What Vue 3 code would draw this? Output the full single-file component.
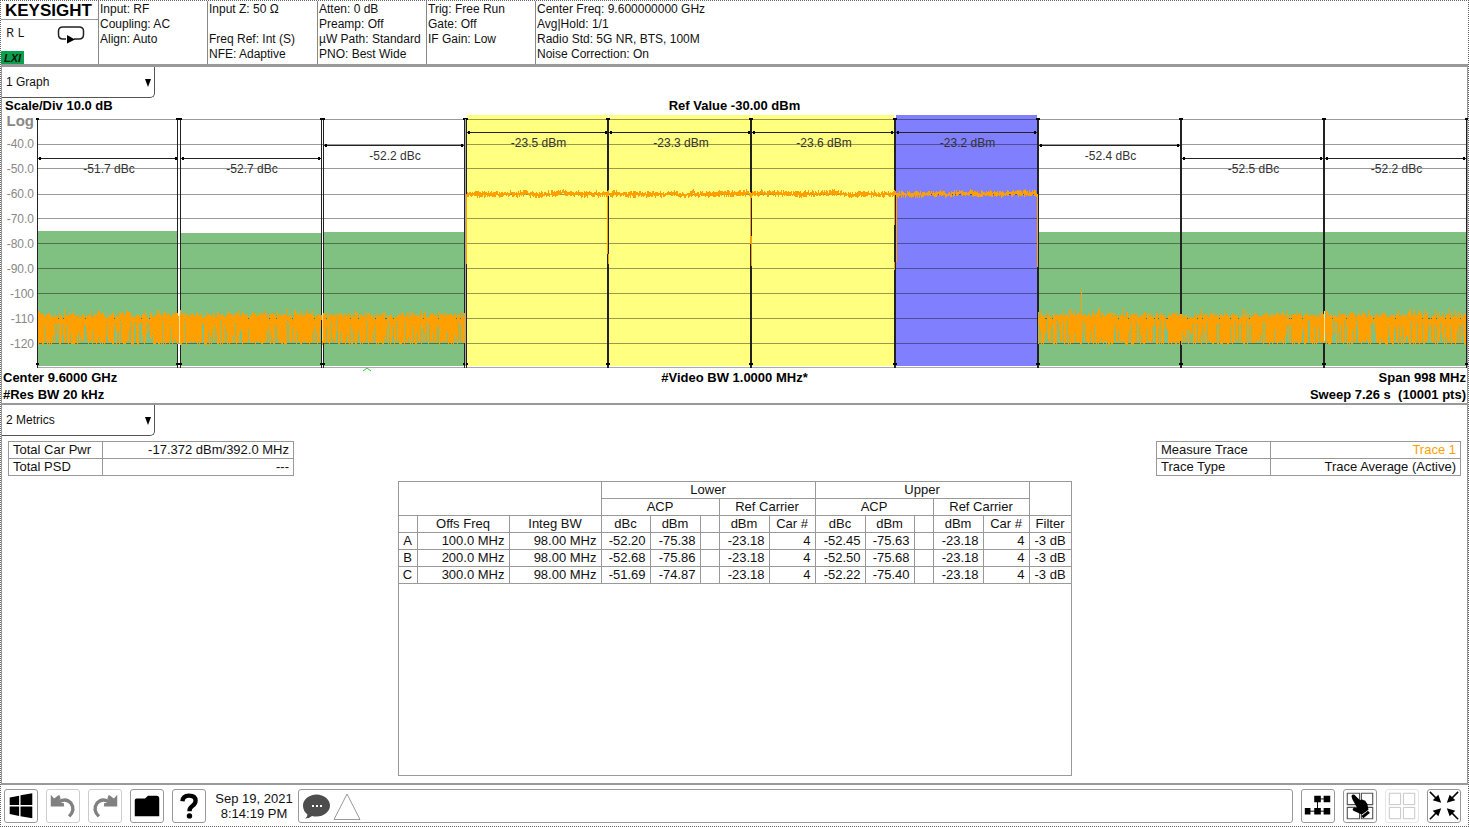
<script setup>
import { ref } from 'vue'

const graphView = ref('1 Graph')
const metricsView = ref('2 Metrics')

const settings = [
  ['Input: RF', 'Coupling: AC', 'Align: Auto'],
  ['Input Z: 50 Ω', '', 'Freq Ref: Int (S)', 'NFE: Adaptive'],
  ['Atten: 0 dB', 'Preamp: Off', 'µW Path: Standard', 'PNO: Best Wide'],
  ['Trig: Free Run', 'Gate: Off', 'IF Gain: Low'],
  ['Center Freq: 9.600000000 GHz', 'Avg|Hold: 1/1', 'Radio Std: 5G NR, BTS, 100M', 'Noise Correction: On'],
]

const axis = ['-40.0', '-50.0', '-60.0', '-70.0', '-80.0', '-90.0', '-100', '-110', '-120']

const plotWidth = 1430
const gridLines = [4, 29, 53, 79, 103, 128, 153, 178, 203, 228]

// Each channel: horizontal extent, top of the bar, height of the arrow line
const channels = [
  { x1: 1, x2: 141, top: 116, arrow: 43, kind: 'offset', label: '-51.7 dBc' },
  { x1: 144, x2: 284, top: 118, arrow: 43, kind: 'offset', label: '-52.7 dBc' },
  { x1: 287, x2: 427, top: 117, arrow: 30, kind: 'offset', label: '-52.2 dBc' },
  { x1: 430, x2: 571, top: 0, arrow: 17, kind: 'carrier', label: '-23.5 dBm' },
  { x1: 572, x2: 714, top: 0, arrow: 17, kind: 'carrier', label: '-23.3 dBm' },
  { x1: 715, x2: 857, top: 0, arrow: 17, kind: 'carrier', label: '-23.6 dBm' },
  { x1: 859, x2: 1000, top: 0, arrow: 17, kind: 'reference', label: '-23.2 dBm' },
  { x1: 1002, x2: 1143, top: 117, arrow: 30, kind: 'offset', label: '-52.4 dBc' },
  { x1: 1145, x2: 1286, top: 117, arrow: 43, kind: 'offset', label: '-52.5 dBc' },
  { x1: 1288, x2: 1429, top: 117, arrow: 43, kind: 'offset', label: '-52.2 dBc' },
]

const edges = [
  { x: 0, w: 1 }, { x: 140, w: 1 }, { x: 143, w: 1 }, { x: 284, w: 1 }, { x: 286, w: 1 },
  { x: 427, w: 1 }, { x: 429, w: 1 }, { x: 570, w: 2 }, { x: 713, w: 2 }, { x: 857, w: 2 },
  { x: 1000, w: 2 }, { x: 1143, w: 2 }, { x: 1286, w: 2 }, { x: 1429, w: 1 },
]

let seed = 7321
function rand() {
  seed = (seed * 16807) % 2147483647
  return seed / 2147483647
}

function noiseFloor(from, to) {
  let d = ''
  for (let x = from; x < to; x++) {
    const top = 197 + Math.round(rand() * 5) - (rand() < 0.1 ? 4 : 0)
    const bottom = 226 + Math.round(rand() * 4)
    const roll = rand()
    if (roll < 0.14) d += `M${x}.5 ${top + 3}V${top + 7 + Math.round(rand() * 6)}`
    else if (roll < 0.26) d += `M${x}.5 ${top + 2}V${bottom - 3 - Math.round(rand() * 12)}`
    else d += `M${x}.5 ${top}V${bottom}`
  }
  return d
}

function plateau(from, to) {
  let d = ''
  let mid = 79
  for (let x = from; x < to; x++) {
    mid += (rand() - 0.5) * 1.4 + (79 - mid) * 0.2
    const up = 0.6 + rand() * 3
    const down = 0.6 + rand() * 3
    d += `M${x}.5 ${Math.round(mid - up)}V${Math.round(mid + down)}`
  }
  return d
}

const floorPath = noiseFloor(1, 428) + noiseFloor(1001, 1429)
const plateauPath = plateau(430, 1000)

const columnWidths = [19, 92, 92, 49, 50, 19, 50, 46, 50, 49, 19, 50, 46, 42]
const columnHeads = ['', 'Offs Freq', 'Integ BW', 'dBc', 'dBm', '', 'dBm', 'Car #', 'dBc', 'dBm', '', 'dBm', 'Car #', 'Filter']
const rows = [
  ['A', '100.0 MHz', '98.00 MHz', '-52.20', '-75.38', '', '-23.18', '4', '-52.45', '-75.63', '', '-23.18', '4', '-3 dB'],
  ['B', '200.0 MHz', '98.00 MHz', '-52.68', '-75.86', '', '-23.18', '4', '-52.50', '-75.68', '', '-23.18', '4', '-3 dB'],
  ['C', '300.0 MHz', '98.00 MHz', '-51.69', '-74.87', '', '-23.18', '4', '-52.22', '-75.40', '', '-23.18', '4', '-3 dB'],
]
</script>

<template>
  <div class="screen">
    <header class="status">
      <div class="brand">
        <div class="logo">KEYSIGHT</div>
        <div class="mode">
          <span>R L</span>
          <svg class="loop" width="28" height="20" viewBox="0 0 28 20">
            <path d="M9 14H6Q1.500 14 1.500 9.500V6Q1.500 2 6 2H22Q26.500 2 26.500 6V9.500Q26.500 14 22 14H17" fill="none" stroke="#222" stroke-width="1.500" />
            <path d="M10 10L18 14.500L10 18.500Z" fill="#000" />
          </svg>
        </div>
        <div class="lxi">LXI</div>
      </div>
      <div v-for="(group, i) in settings" :key="i" class="group">
        <div v-for="(line, j) in group" :key="j" class="line">{{ line }}</div>
      </div>
    </header>

    <main class="panels">
      <section class="panel graph">
        <div class="picker">
          <select v-model="graphView" aria-label="Graph window"><option>1 Graph</option></select>
          <svg width="6" height="8" viewBox="0 0 6 8"><path d="M0 0H6L3 8Z" /></svg>
        </div>
        <div class="captions head">
          <span>Scale/Div 10.0 dB</span><span>Ref Value -30.00 dBm</span><span></span>
        </div>
        <div class="chart">
          <div class="axis">
            <div class="log">Log</div>
            <div v-for="a in axis" :key="a" class="tick">{{ a }}</div>
          </div>
          <div class="plot">
            <svg class="canvas" viewBox="0 0 1430 254" preserveAspectRatio="none" shape-rendering="crispEdges">
              <rect v-for="c in channels" :key="'b' + c.x1" :class="c.kind" :x="c.x1" :y="c.top" :width="c.x2 - c.x1" :height="251 - c.top" />
              <rect v-for="g in gridLines" :key="'g' + g" class="grid" x="0" :y="g" width="1430" height="1" />
              <rect x="0" y="252" width="1430" height="1" fill="#aaa" />
              <g v-for="e in edges" :key="'e' + e.x">
                <rect :x="e.x" y="4" :width="e.w" height="249" fill="#222" />
                <rect :x="e.x - 1" y="3" :width="e.w + 2" height="2" />
                <rect :x="e.x - 1" y="248" :width="e.w + 2" height="2" />
              </g>
              <rect x="428" y="4" width="1" height="247" fill="#aaa" />
              <g v-for="c in channels" :key="'a' + c.x1">
                <rect :x="c.x1" :y="c.arrow" :width="c.x2 - c.x1" height="1" fill="#222" />
                <rect :x="c.x1 + 1" :y="c.arrow - 1" width="2" height="3" />
                <rect :x="c.x2 - 3" :y="c.arrow - 1" width="2" height="3" />
              </g>
              <g class="trace">
                <path :d="floorPath" />
                <path :d="plateauPath" />
                <path d="M429.500 79V149M570.500 79V139M571.500 139V149M714.500 121V151M713.500 79V129M857.500 79V110M857.500 147V155M859.500 79V147M1000.500 79V152M1044.500 175V200" />
              </g>
              <path d="M142.500 198V228M1287.500 196V226" stroke="#ffe0a0" />
              <path d="M285.500 200V226" stroke="#ffd080" />
              <path d="M326 256L330 253L334 256" fill="none" stroke="#3c3" shape-rendering="auto" />
            </svg>
            <span v-for="c in channels" :key="'l' + c.x1" class="label" :style="{ left: ((c.x1 + c.x2 + 2) / 2 / plotWidth) * 100 + '%', top: c.arrow + 3 + 'px' }">{{ c.label }}</span>
          </div>
        </div>
        <div class="captions foot">
          <span>Center 9.6000 GHz</span><span>#Video BW 1.0000 MHz*</span><span>Span 998 MHz</span>
          <span>#Res BW 20 kHz</span><span></span><span>Sweep 7.26 s&nbsp; (10001 pts)</span>
        </div>
      </section>

      <section class="panel metrics">
        <div class="picker">
          <select v-model="metricsView" aria-label="Metrics window"><option>2 Metrics</option></select>
          <svg width="6" height="8" viewBox="0 0 6 8"><path d="M0 0H6L3 8Z" /></svg>
        </div>
        <div class="summaries">
          <table class="summary power">
            <colgroup><col class="name" /><col /></colgroup>
            <tbody>
              <tr><th scope="row">Total Car Pwr</th><td>-17.372 dBm/392.0 MHz</td></tr>
              <tr><th scope="row">Total PSD</th><td>---</td></tr>
            </tbody>
          </table>
          <table class="summary tracing">
            <colgroup><col class="name" /><col /></colgroup>
            <tbody>
              <tr><th scope="row">Measure Trace</th><td class="orange">Trace 1</td></tr>
              <tr><th scope="row">Trace Type</th><td>Trace Average (Active)</td></tr>
            </tbody>
          </table>
        </div>
        <div class="results">
          <table>
            <colgroup><col v-for="(w, i) in columnWidths" :key="i" :style="{ width: w + 'px' }" /></colgroup>
            <thead>
              <tr><td colspan="3" rowspan="2"></td><th colspan="5">Lower</th><th colspan="5">Upper</th><td rowspan="2"></td></tr>
              <tr><th colspan="3">ACP</th><th colspan="2">Ref Carrier</th><th colspan="3">ACP</th><th colspan="2">Ref Carrier</th></tr>
              <tr><th v-for="(h, i) in columnHeads" :key="i">{{ h }}</th></tr>
            </thead>
            <tbody>
              <tr v-for="r in rows" :key="r[0]"><td v-for="(v, i) in r" :key="i">{{ v }}</td></tr>
            </tbody>
          </table>
        </div>
      </section>
    </main>

    <footer class="bar">
      <button class="tool" aria-label="Windows">
        <svg viewBox="0 0 34 34"><path d="M5 8L15 6V16H5ZM16.500 5.700L29 3.500V16H16.500ZM5 17.500H15V27.500L5 25.500ZM16.500 17.500H29V30L16.500 27.800Z" /></svg>
      </button>
      <button class="tool dim" aria-label="Undo">
        <svg viewBox="0 0 34 34"><path d="M11 13.500Q20 7.500 25.500 14Q30.500 21 23.500 28" fill="none" stroke="#808080" stroke-width="3.500" /><path d="M4 5L7.500 9L13 5L14.500 9L11.500 12.500L18 14V17.500H4Z" fill="#808080" /></svg>
      </button>
      <button class="tool dim" aria-label="Redo">
        <svg viewBox="0 0 34 34"><path d="M23 13.500Q14 7.500 8.500 14Q3.500 21 10.500 28" fill="none" stroke="#808080" stroke-width="3.500" /><path d="M30 5L26.500 9L21 5L19.500 9L22.500 12.500L16 14V17.500H30Z" fill="#808080" /></svg>
      </button>
      <button class="tool" aria-label="Files">
        <svg viewBox="0 0 34 34"><path d="M4 28V11Q4 9 6 9H15L18 6H27Q30 6 30 9V28Z" /></svg>
      </button>
      <button class="tool" aria-label="Help">
        <svg viewBox="0 0 34 34"><path d="M10 12Q10.500 6 17 6Q24 6 24 11.500Q24 14.500 20.500 17Q17.500 19 17.500 22.500" fill="none" stroke="#000" stroke-width="4.600" /><circle cx="17.500" cy="27.500" r="2.900" /></svg>
      </button>
      <div class="clock">Sep 19, 2021<br />8:14:19 PM</div>
      <div class="message">
        <svg width="62" height="32" viewBox="0 0 62 32">
          <path d="M17.500 4.500C25 4.500 31 9.500 31 15.500S25 26.500 17.500 26.500Q15 26.500 13 26Q10 28.500 6 28.500Q8.500 26.500 8.500 24.500Q4 21 4 15.500C4 9.500 10 4.500 17.500 4.500Z" fill="#4d4d4d" />
          <path d="M13 15H15V17H13ZM17 15H19V17H17ZM21 15H23V17H21Z" fill="#fff" />
          <path d="M48 4L61 29.500H35Z" fill="#fff" stroke="#999" />
        </svg>
      </div>
      <button class="tool" aria-label="Screen layout">
        <svg viewBox="0 0 34 34"><path d="M16.500 9.500V23M16.500 9.500H27M6 22.500H27" fill="none" stroke="#000" stroke-width="1" /><path d="M13 6H20V13H13ZM23 6H30V13H23ZM3 19H9V26H3ZM13 19H20V26H13ZM23 19H30V26H23Z" /></svg>
      </button>
      <button class="tool" aria-label="Select window">
        <svg viewBox="0 0 34 34"><path d="M3.500 3.500H16.500V15.500H3.500ZM18.500 3.500H30.500V15.500H18.500ZM3.500 18.500H16.500V30.500H3.500ZM18.500 18.500H30.500V30.500H18.500Z" fill="none" stroke="#555" stroke-width="1.200" /><path d="M8 7Q8 4 11 5L17 11Q19 9 21 11Q23 11 23.500 13Q25 14 25 16L26 21L19 26L10 22Q8 20 11 18.500L14 19L9 10Z" /><path d="M18.500 27.500L25.500 22L27.500 24.500L20.500 30Z" /></svg>
      </button>
      <button class="tool faint" aria-label="Multiple windows">
        <svg viewBox="0 0 34 34"><path d="M3.500 3.500H15.500V15.500H3.500ZM18.500 3.500H30.500V15.500H18.500ZM3.500 18.500H15.500V30.500H3.500ZM18.500 18.500H30.500V30.500H18.500Z" fill="none" stroke="#c4c4c4" /></svg>
      </button>
      <button class="tool" aria-label="Exit full screen">
        <svg viewBox="0 0 34 34"><path d="M2 2L10 10M32 2L24 10M2 31L10 23M32 31L24 23" stroke="#000" stroke-width="1.600" /><path d="M14 13.500L5 11L11 5ZM20 13.500L29 11L23 5ZM14 19.500L5 22L11 28ZM20 19.500L29 22L23 28Z" /></svg>
      </button>
    </footer>
  </div>
</template>

<style>
body {
  margin: 0;
  background: #fff;
}
</style>

<style scoped>
.screen {
  box-sizing: border-box;
  min-height: 100vh;
  display: flex;
  flex-direction: column;
  border: 1px dotted #666;
  font-family: "Liberation Sans", Arial, sans-serif;
  font-size: 13px;
  color: #111;
  background: #fff;
}
.status {
  display: grid;
  grid-template-columns: 97px 109px 110px 109px 109px 1fr;
  border-bottom: 3px solid #999;
  height: 63px;
}
.group {
  border-left: 1px solid #888;
  padding: 1px 0 0 1px;
  font-size: 12px;
  white-space: nowrap;
}
.line {
  height: 15px;
  line-height: 15px;
}
.brand {
  display: flex;
  flex-direction: column;
}
.logo {
  height: 18px;
  line-height: 19px;
  padding-left: 4px;
  border-bottom: 1px solid #999;
  font-size: 17px;
  font-weight: bold;
  color: #000;
}
.mode {
  flex: 1;
  display: flex;
  align-items: flex-start;
  justify-content: space-between;
  padding: 2px 13px 0 5px;
  font: 13px/20px "Open Sans", sans-serif;
}
.loop {
  margin-top: 3px;
}
.lxi {
  width: 23px;
  height: 13px;
  line-height: 14px;
  text-align: center;
  background: #0ba04c;
  font-size: 11px;
  font-weight: bold;
  font-style: italic;
}
.panels {
  flex: 1;
  display: flex;
  flex-direction: column;
  border: 1px solid #999;
  border-width: 0 1px;
}
.panel {
  border-bottom: 2px solid #999;
}
.metrics {
  flex: 1;
  display: flex;
  flex-direction: column;
}
.picker {
  position: relative;
  box-sizing: border-box;
  width: 153px;
  height: 31px;
  border: 1px solid #555;
  border-width: 0 1px 1px 0;
  border-radius: 0 0 5px 0;
}
.picker select {
  appearance: none;
  width: 100%;
  height: 100%;
  border: 0;
  padding: 0 4px;
  background: transparent;
  font: 12px "Liberation Sans", Arial, sans-serif;
  color: #111;
}
.picker svg {
  position: absolute;
  right: 3px;
  top: 12px;
  pointer-events: none;
}
.captions {
  display: grid;
  grid-template-columns: 1fr 1fr 1fr;
  padding: 0 1px;
  font-weight: bold;
  line-height: 17px;
  color: #000;
}
.captions span:nth-child(3n + 2) {
  text-align: center;
}
.captions span:nth-child(3n) {
  text-align: right;
}
.head {
  line-height: 15px;
  padding: 0 3px 2px;
}
.chart {
  display: grid;
  grid-template-columns: 35px 1fr;
  height: 254px;
}
.axis {
  color: #888;
  font-size: 12px;
  text-align: right;
  padding-right: 3px;
}
.log {
  font-size: 15px;
  font-weight: bold;
  line-height: 12px;
  margin-bottom: 5px;
}
.tick {
  line-height: 25px;
}
.plot {
  position: relative;
}
.canvas {
  display: block;
  width: 100%;
  height: 254px;
  overflow: visible;
}
.offset {
  fill: #80c080;
}
.carrier {
  fill: #ffff80;
}
.reference {
  fill: #8080ff;
}
.grid {
  fill: #000;
  fill-opacity: 0.4;
}
.trace path {
  fill: none;
  stroke: #ffa000;
}
.label {
  position: absolute;
  transform: translateX(-50%);
  white-space: nowrap;
  font-size: 12px;
  line-height: 16px;
  color: #333;
}
.summaries {
  display: flex;
  justify-content: space-between;
  padding: 5px 6px 5px;
}
table {
  border-collapse: collapse;
  table-layout: fixed;
}
th {
  font-weight: normal;
}
td,
th {
  box-sizing: border-box;
  height: 17px;
  padding: 0 4px;
  border: 1px solid #999;
  line-height: 16px;
  white-space: nowrap;
  text-align: right;
}
.summary th {
  text-align: left;
}
.power {
  width: 286px;
}
.power .name {
  width: 94px;
}
.tracing {
  width: 305px;
}
.tracing .name {
  width: 114px;
}
.orange {
  color: #ffa000;
}
.results {
  box-sizing: border-box;
  flex: 1;
  width: 674px;
  margin: 0 auto 7px;
  border: 1px solid #999;
}
.results table {
  width: 674px;
  margin: -1px;
}
.results th {
  text-align: center;
  padding: 0;
}
.results td:first-child,
.results td:last-child {
  text-align: center;
  padding: 0;
}
.bar {
  display: flex;
  align-items: center;
  gap: 8px;
  padding: 4px 7px 3px 3px;
}
.tool {
  box-sizing: border-box;
  width: 34px;
  height: 34px;
  padding: 0;
  border: 1px solid #999;
  border-radius: 3px;
  background: #fff;
}
.tool svg {
  display: block;
  width: 100%;
  height: 100%;
}
.dim {
  border-color: #ccc;
}
.faint {
  border-color: #e6e6e6;
}
.clock {
  width: 80px;
  margin-right: -4px;
  text-align: center;
  line-height: 15px;
}
.message {
  box-sizing: border-box;
  flex: 1;
  height: 34px;
  border: 1px solid #999;
  border-radius: 3px;
}
</style>
